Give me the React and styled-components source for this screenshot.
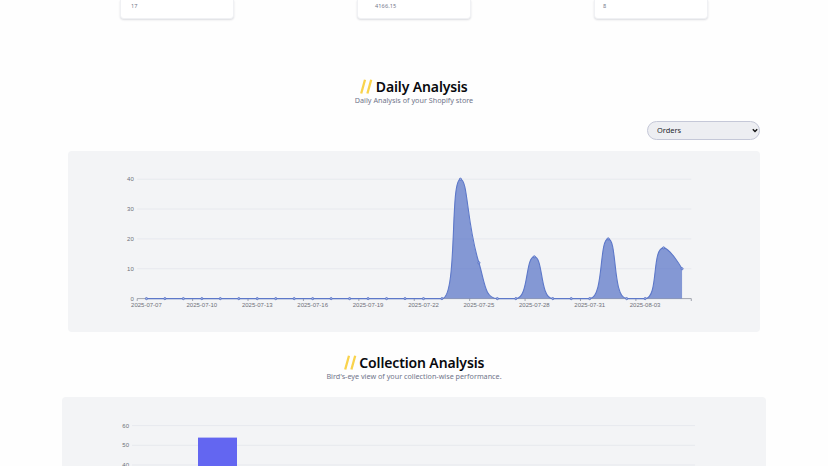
import React, { useState } from 'react';
import styled, { createGlobalStyle } from 'styled-components';

const GlobalStyle = createGlobalStyle`
  body {
    margin: 0;
    background-color: #fefefe;
    font-family: 'Noto Sans', sans-serif;
  }
`;

const Page = styled.main`
  display: flex;
  flex-direction: column;
  align-items: center;
  width: 828px;
  height: 466px;
  overflow: hidden;
`;

const Stats = styled.div`
  display: flex;
  flex-shrink: 0;
  gap: 123px;
  height: 18px;
`;

const StatCard = styled.div`
  box-sizing: border-box;
  width: 114px;
  height: 18.5px;
  padding-left: ${({ $indent }) => $indent}px;
  border: 1px solid #f0f1f4;
  border-top: 0;
  border-radius: 0 0 4px 4px;
  background-color: #fff;
  box-shadow: 0 1px 2px rgba(40, 45, 70, 0.16);
  color: #73788a;
  font-size: 5.6px;
  line-height: 12px;
  letter-spacing: 0.1px;
`;

const SectionHeader = styled.header`
  display: flex;
  flex-direction: column;
  flex-shrink: 0;
  align-items: center;
  height: 28px;
  margin-top: ${({ $top }) => $top}px;
`;

const Title = styled.h2`
  display: flex;
  align-items: center;
  gap: 2.5px;
  margin: 0;
  color: #08090d;
  font-size: 14px;
  font-weight: 600;
  line-height: 17px;
  letter-spacing: -0.13px;
  white-space: nowrap;
`;

const Slashes = styled.svg`
  width: 13px;
  height: 15px;
  stroke: #f9d34c;
  stroke-width: 2.3;
`;

const Subtitle = styled.p`
  margin: 0;
  color: #70758a;
  font-size: 7.2px;
  line-height: 10px;
  letter-spacing: 0.01px;
  white-space: nowrap;
`;

const Toolbar = styled.div`
  display: flex;
  flex-shrink: 0;
  justify-content: flex-end;
  width: 692px;
  margin-top: 15px;
`;

const SelectBox = styled.label`
  display: grid;
  grid-template-columns: 1fr 7px;
  align-items: center;
  box-sizing: border-box;
  width: 113px;
  height: 19px;
  padding: 0 0 1px 9px;
  border: 1px solid #c5c8d8;
  border-radius: 10px;
  background-color: #edeef2;
`;

const Select = styled.select`
  appearance: none;
  padding: 0;
  border: 0;
  outline: 0;
  background: transparent;
  color: #24262e;
  font-family: 'Noto Sans', sans-serif;
  font-size: 7.4px;
  line-height: 10px;
`;

const Chevron = styled.svg`
  width: 6px;
  height: 5px;
  fill: none;
  stroke: #111;
  stroke-width: 1.4;
`;

const Panel = styled.section`
  flex-shrink: 0;
  width: ${({ $width }) => $width}px;
  height: ${({ $height }) => $height}px;
  margin-top: ${({ $top }) => $top}px;
  border-radius: 4px;
  background-color: #f3f4f6;
  overflow: hidden;
`;

const Chart = styled.svg`
  display: block;
  width: 100%;
  height: 100%;
  font-family: 'Liberation Sans', Arial, sans-serif;
`;

const GridLine = styled.line`
  stroke: #e7e9ee;
  stroke-width: 1;
`;

const AxisLabel = styled.text`
  fill: #6e7079;
  font-size: 6px;
  text-anchor: ${({ $anchor }) => $anchor || 'middle'};
`;

const orders = [
  0, 0, 0, 0, 0, 0, 0, 0, 0, 0,
  0, 0, 0, 0, 0, 0, 0, 40, 12, 0,
  0, 14, 0, 0, 0, 20, 0, 0, 17, 10,
];

const days = [
  '2025-07-07', '2025-07-10', '2025-07-13', '2025-07-16', '2025-07-19',
  '2025-07-22', '2025-07-25', '2025-07-28', '2025-07-31', '2025-08-03',
];

const LEFT = 69.2;
const RIGHT = 623.3;
const BASE = 147.6;
const STEP = (RIGHT - LEFT) / orders.length;

const points = orders.map((value, i) => [LEFT + STEP * (i + 0.5), BASE - value * 2.985]);

const clamp = (v, a, b) => Math.max(Math.min(a, b), Math.min(Math.max(a, b), v));
const distance = (a, b) => Math.hypot(a[0] - b[0], a[1] - b[1]);

// smooth line whose control points never leave the box of their segment
function smoothPath(pts, smooth = 0.5) {
  let out = pts[0];
  let path = `M${pts[0]}`;
  for (let i = 1; i < pts.length; i += 1) {
    const prev = pts[i - 1];
    const cur = pts[i];
    const next = pts[i + 1];
    let inn = cur;
    let nextOut = cur;
    if (next) {
      const before = distance(prev, cur);
      const after = distance(cur, next);
      const ratio = after / (after + before);
      nextOut = cur.map((c, k) => clamp(c + (next[k] - prev[k]) * smooth * ratio, c, next[k]));
      inn = cur.map((c, k) => clamp(c - ((nextOut[k] - c) * before) / after, c, prev[k]));
      nextOut = cur.map((c, k) => c + ((c - inn[k]) * after) / before);
    }
    path += `C${out} ${inn} ${cur}`;
    out = nextOut;
  }
  return path;
}

const line = smoothPath(points);
const area = `${line}L${points[points.length - 1][0]},${BASE}L${points[0][0]},${BASE}Z`;

function DailyChart() {
  return (
    <Chart viewBox="0 0 692 181">
      {[10, 20, 30, 40].map((v) => (
        <GridLine key={v} x1={LEFT} x2={RIGHT} y1={BASE - v * 2.985} y2={BASE - v * 2.985} />
      ))}
      {[0, 10, 20, 30, 40].map((v) => (
        <AxisLabel key={v} $anchor="end" x={65.8} y={BASE - v * 2.985 + 2.2}>{v}</AxisLabel>
      ))}
      <g stroke="#8d909c" strokeWidth="0.8">
        <line x1={LEFT} x2={RIGHT} y1={BASE} y2={BASE} />
        {[...days, 'end'].map((day, i) => (
          <line key={day} x1={LEFT + STEP * 3 * i} x2={LEFT + STEP * 3 * i} y1={BASE} y2={BASE + 2.4} />
        ))}
      </g>
      <path d={area} fill="#5470c6" fillOpacity="0.7" />
      <path d={line} fill="none" stroke="#5d78c9" strokeWidth="1.1" />
      {points.map(([x, y]) => (
        <circle key={x} cx={x} cy={y} r="1.1" fill="#a3b3e0" stroke="#5470c6" strokeWidth="0.8" />
      ))}
      {days.map((day, i) => (
        <AxisLabel key={day} x={points[i * 3][0]} y={156.1}>{day}</AxisLabel>
      ))}
    </Chart>
  );
}

function CollectionChart() {
  return (
    <Chart viewBox="0 0 704 72">
      {[60, 50, 40].map((v, i) => (
        <React.Fragment key={v}>
          <GridLine x1="70" x2="633" y1={28.6 + i * 19.7} y2={28.6 + i * 19.7} />
          <AxisLabel $anchor="end" x="67" y={30.7 + i * 19.7}>{v}</AxisLabel>
        </React.Fragment>
      ))}
      <rect x="136" y="40.6" width="39" height="40" fill="#6366f1" />
    </Chart>
  );
}

function SectionTitle({ top, title, subtitle }) {
  return (
    <SectionHeader $top={top}>
      <Title>
        <Slashes viewBox="0 0 13 15">
          <path d="M1.2 14.5 5 .8M7.4 14.5 11.2 .8" />
        </Slashes>
        {title}
      </Title>
      <Subtitle>{subtitle}</Subtitle>
    </SectionHeader>
  );
}

export default function App() {
  const [metric, setMetric] = useState('Orders');

  return (
    <>
      <GlobalStyle />
      <Page>
        <Stats>
          <StatCard $indent={10}>17</StatCard>
          <StatCard $indent={17}>4166.15</StatCard>
          <StatCard $indent={8}>8</StatCard>
        </Stats>

        <SectionTitle
          top={60}
          title="Daily Analysis"
          subtitle="Daily Analysis of your Shopify store"
        />

        <Toolbar>
          <SelectBox>
            <Select value={metric} onChange={(e) => setMetric(e.target.value)}>
              <option>Orders</option>
            </Select>
            <Chevron viewBox="0 0 6 5">
              <path d="m.8 1.2 2.2 2.2 2.2-2.2" />
            </Chevron>
          </SelectBox>
        </Toolbar>

        <Panel $width={692} $height={181} $top={11}>
          <DailyChart />
        </Panel>

        <SectionTitle
          top={22}
          title="Collection Analysis"
          subtitle="Bird's-eye view of your collection-wise performance."
        />

        <Panel $width={704} $height={72} $top={15}>
          <CollectionChart />
        </Panel>
      </Page>
    </>
  );
}
